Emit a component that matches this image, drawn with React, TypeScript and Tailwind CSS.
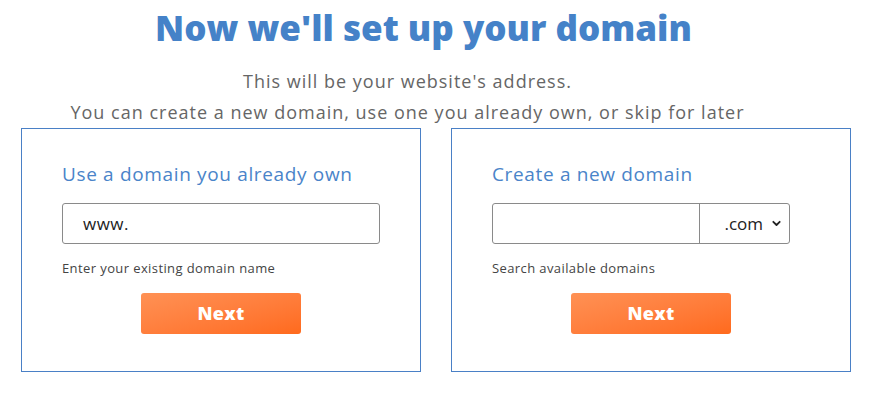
import React from "react";

const font = { fontFamily: '"Open Sans", "Noto Sans", sans-serif' };

function Chevron() {
  return (
    <svg width="9" height="7" viewBox="0 0 9 7" className="ml-[9px]">
      <path d="M1.3 1.8 L4.5 5 L7.7 1.8" fill="none" stroke="#222" strokeWidth="1.8" strokeLinecap="round" strokeLinejoin="round" />
    </svg>
  );
}

function NextButton() {
  return (
    <div className="flex justify-center mt-[16px]">
      <button className="w-[160px] h-[41px] rounded-[3px] text-white text-[18px] font-extrabold bg-gradient-to-br from-[#ff9154] to-[#ff6a1c] tracking-[0.3px]">
        Next
      </button>
    </div>
  );
}

function Box({ children, helper, title }: { children: React.ReactNode; helper: string; title: string }) {
  return (
    <div className="w-[400px] h-[244px] border border-[#4a80c6] pt-[30px]">
      <div className="pl-[40px]">
        <h2 className="text-[19px] leading-[30px] text-[#4a84c9] tracking-[0.65px]">{title}</h2>
        {children}
        <p className="mt-[15px] text-[13px] leading-[18px] text-[#444] tracking-[0.4px]">{helper}</p>
      </div>
      <NextButton />
    </div>
  );
}

export default function App() {
  return (
    <div className="w-[877px] h-[408px] bg-white overflow-hidden" style={font}>
      <h1 className="pr-[30px] pt-[4px] text-center text-[35px] leading-[48px] font-extrabold text-[#4582c8]">
        Now we'll set up your domain
      </h1>
      <div className="pr-[62px] mt-[14px] text-center text-[#666] text-[18px] leading-[31px] tracking-[1px]">
        <p>This will be your website's address.</p>
        <p>You can create a new domain, use one you already own, or skip for later</p>
      </div>
      <div className="flex gap-[30px] pl-[21px]">
        <Box title="Use a domain you already own" helper="Enter your existing domain name">
          <div className="mt-[14px] w-[318px] h-[41px] border border-[#8a8a8a] rounded-[3px] flex items-center pl-[20px] text-[17px] text-[#222] tracking-[0.5px]">
            www.
          </div>
        </Box>
        <Box title="Create a new domain" helper="Search available domains">
          <div className="mt-[14px] w-[298px] h-[41px] border border-[#8a8a8a] rounded-[3px] flex">
            <div className="w-[207px] border-r border-[#8a8a8a]" />
            <div className="flex-1 flex items-center justify-end pr-[8px] text-[17px] text-[#222]">
              .com
              <Chevron />
            </div>
          </div>
        </Box>
      </div>
    </div>
  );
}
